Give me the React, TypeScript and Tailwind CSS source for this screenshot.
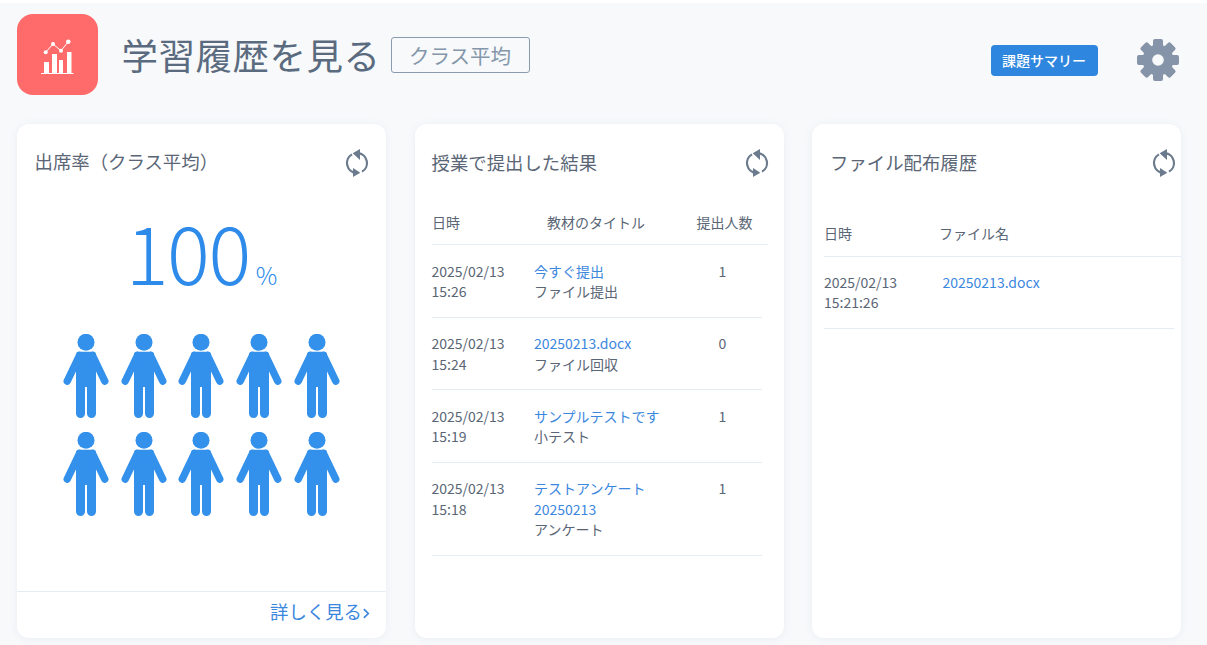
// 更新アイコン
function RefreshIcon() {
  return (
    <svg viewBox="0 0 24 28" className="h-[28px] w-[24px]" fill="none">
      <path d="M13 4.050A10 10 0 0 1 17 22.660" stroke="#6b7a8d" strokeWidth="2.200" />
      <path d="M7.700 4.300 15 0v11z" fill="#6b7a8d" />
      <path d="M7 5.340A10 10 0 0 0 11 23.950" stroke="#6b7a8d" strokeWidth="2.200" />
      <path d="M15.300 23.700 8 19v9z" fill="#6b7a8d" />
    </svg>
  );
}

function GearIcon() {
  const teeth = [0, 45, 90, 135, 180, 225, 270, 315];
  return (
    <svg viewBox="0 0 42 42" className="h-[42px] w-[42px]">
      <mask id="gear-hole">
        <rect width="42" height="42" fill="#fff" />
        <circle cx="21" cy="21" r="5.800" fill="#000" />
      </mask>
      <g fill="#8594a8" mask="url(#gear-hole)">
        <circle cx="21" cy="21" r="15.500" />
        {teeth.map((a) => (
          <rect key={a} x="16" y="0" width="10" height="12" rx="2" transform={`rotate(${a} 21 21)`} />
        ))}
      </g>
    </svg>
  );
}

function ChartIcon() {
  return (
    <svg viewBox="0 0 33 36" className="mt-[5px] h-[36px] w-[33px]" fill="#fff">
      <rect x="3" y="23" width="5" height="11" />
      <rect x="11" y="15" width="5" height="19" />
      <rect x="18" y="21" width="4" height="13" />
      <rect x="26" y="13" width="4.500" height="21" />
      <rect x="0" y="34" width="32.500" height="1" />
      <path d="M4.700 13.300 12 5l8 6.700 7.300-9" stroke="#fff" strokeWidth="1" fill="none" />
      <circle cx="4.700" cy="13.300" r="2" />
      <circle cx="12" cy="5" r="2" />
      <circle cx="20" cy="11.700" r="2" />
      <circle cx="27.300" cy="2.700" r="2.300" />
    </svg>
  );
}

function Person() {
  return (
    <svg viewBox="0 0 46 85" className="h-[85px] w-[46px]">
      <circle cx="23" cy="8.300" r="8.500" fill="#3391ec" />
      <path d="M16 17.700h14a3 3 0 0 1 3 3V79.500a4.500 4.500 0 0 1-9 0V53h-2v26.500a4.500 4.500 0 0 1-9 0V20.700a3 3 0 0 1 3-3z" fill="#3391ec" />
      <path d="M16.500 21.500 4.300 47M29.500 21.500 41.700 47" stroke="#3391ec" strokeWidth="7.500" strokeLinecap="round" />
    </svg>
  );
}

const submissions = [
  { date: "2025/02/13", time: "15:26", titles: ["今すぐ提出"], type: "ファイル提出", count: 1 },
  { date: "2025/02/13", time: "15:24", titles: ["20250213.docx"], type: "ファイル回収", count: 0 },
  { date: "2025/02/13", time: "15:19", titles: ["サンプルテストです"], type: "小テスト", count: 1 },
  { date: "2025/02/13", time: "15:18", titles: ["テストアンケート", "20250213"], type: "アンケート", count: 1 },
];

export default function App() {
  return (
    <div className="h-[645px] w-[1207px] overflow-hidden bg-white pt-[3px] font-['Noto_Sans_CJK_JP','Noto_Sans',sans-serif] text-[#5a6675]">
      <div className="h-[642px] bg-[#f7f9fb] pl-[17px]">
        {/* ヘッダー */}
        <header className="flex h-[121px] items-start pt-[11px]">
          <div className="flex h-[81px] w-[81px] items-center justify-center rounded-[16px] bg-[#ff6b6b]">
            <ChartIcon />
          </div>
          <h1 className="ml-[23.500px] mt-[15px] text-[36.500px] leading-[52px] tracking-[0.500px] text-[#5b6b7f]">学習履歴を見る</h1>
          <span className="ml-[10px] mt-[23px] flex h-[36px] w-[139px] items-center justify-center rounded-[3px] border border-[#8a9bb0] text-[20.500px] text-[#8496aa]">
            クラス平均
          </span>
          <button className="ml-[461px] mt-[31px] h-[31px] w-[107px] rounded-[4px] bg-[#2e86de] text-[14px] font-medium text-white">
            課題サマリー
          </button>
          <div className="ml-[39px] mt-[25px]">
            <GearIcon />
          </div>
        </header>

        <div className="flex gap-[28.500px]">
          {/* 出席率 */}
          <section className="flex h-[514px] w-[369px] flex-col rounded-[12px] bg-white shadow-[0_1px_8px_rgba(100,116,139,0.08)]">
            <div className="flex h-[76px] items-start justify-between pl-[17.500px] pr-[17px] pt-[21px]">
              <h2 className="text-[18.400px] leading-[32px]">出席率（クラス平均）</h2>
              <div className="mt-[4px]">
                <RefreshIcon />
              </div>
            </div>
            <div className="flex h-[134px] items-baseline justify-center text-[#2e8bea]">
              <span className="text-[80px] font-light leading-[101px] tracking-[-1.500px]">100</span>
              <span className="ml-[6px] text-[24px] font-light">%</span>
            </div>
            <div className="ml-[46px] grid w-[277px] grid-cols-5 gap-x-[11.500px] gap-y-[13px]">
              {Array.from({ length: 10 }).map((_, i) => (
                <Person key={i} />
              ))}
            </div>
            <div className="mt-auto flex h-[47px] items-center justify-end border-t border-[#e6ecf3] pb-[6px] pr-[16px] text-[18.400px] text-[#3b87de]">
              詳しく見る
              <svg viewBox="0 0 8 12" className="ml-px mt-[3px] h-[11px] w-[7px]" fill="none" stroke="#3b87de" strokeWidth="2">
                <path d="m1 1 5 5-5 5" />
              </svg>
            </div>
          </section>

          {/* 提出結果 */}
          <section className="h-[514px] w-[369px] rounded-[12px] bg-white pl-[17px] shadow-[0_1px_8px_rgba(100,116,139,0.08)]">
            <div className="flex h-[79px] items-start justify-between pr-[15px] pt-[21px]">
              <h2 className="text-[18.400px] leading-[34px]">授業で提出した結果</h2>
              <div className="mt-[4px]">
                <RefreshIcon />
              </div>
            </div>
            <div className="mr-[16px] flex h-[42px] items-start border-b border-[#e6ecf3] pl-[0.500px] pt-[9px] text-[14px] leading-[20px]">
              <span className="w-[115px]">日時</span>
              <span className="w-[149.500px]">教材のタイトル</span>
              <span>提出人数</span>
            </div>
            <div className="mr-[22px] text-[14px] leading-[20.500px]">
              {submissions.map((row) => (
                <div key={row.time} className="flex border-b border-[#e6ecf3] pb-[15px] pt-[15.500px]">
                  <div className="w-[102.500px]">
                    <p>{row.date}</p>
                    <p>{row.time}</p>
                  </div>
                  <div className="w-[160px]">
                    {row.titles.map((t) => (
                      <p key={t} className="text-[#3b87de]">{t}</p>
                    ))}
                    <p>{row.type}</p>
                  </div>
                  <div className="w-[57px] text-center">{row.count}</div>
                </div>
              ))}
            </div>
          </section>

          {/* ファイル配布履歴 */}
          <section className="h-[514px] w-[369px] rounded-[12px] bg-white pl-[12px] shadow-[0_1px_8px_rgba(100,116,139,0.08)]">
            <div className="flex h-[90px] items-start justify-between pl-[6px] pr-[5px] pt-[21px]">
              <h2 className="text-[18.400px] leading-[34px]">ファイル配布履歴</h2>
              <div className="mt-[4px]">
                <RefreshIcon />
              </div>
            </div>
            <div className="flex h-[43px] items-start border-b border-[#e6ecf3] pt-[9px] text-[14px] leading-[20px]">
              <span className="w-[115px]">日時</span>
              <span>ファイル名</span>
            </div>
            <div className="mr-[7px] flex border-b border-[#e6ecf3] pb-[15px] pt-[14.500px] text-[14px] leading-[20.500px]">
              <div className="w-[118.500px]">
                <p>2025/02/13</p>
                <p>15:21:26</p>
              </div>
              <p className="text-[#3b87de]">20250213.docx</p>
            </div>
          </section>
        </div>
      </div>
    </div>
  );
}
